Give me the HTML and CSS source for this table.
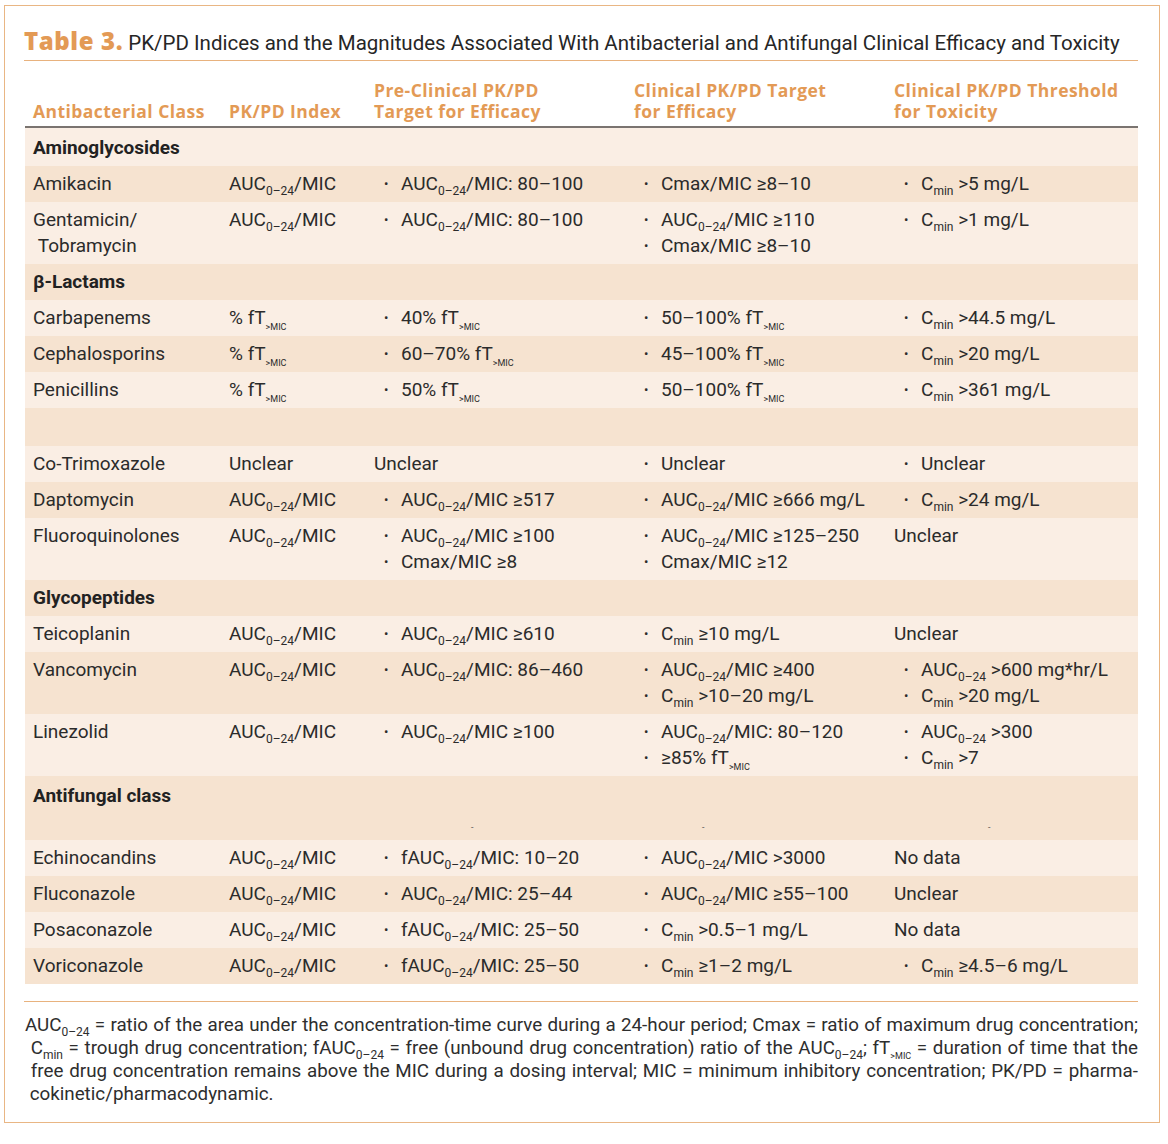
FILE: index.html
```html
<!DOCTYPE html>
<html>
<head>
<meta charset="utf-8">
<link rel="stylesheet" href="styles.css">
</head>
<body>
<div class="box">
  <div class="title"><span class="tnum">Table 3.</span> PK/PD Indices and the Magnitudes Associated With Antibacterial and Antifungal Clinical Efficacy and Toxicity</div>
  <table class="tbl">
    <colgroup>
      <col class="c1"><col class="c2"><col class="c3"><col class="c4"><col class="c5">
    </colgroup>
    <thead>
      <tr>
        <th>Antibacterial Class</th>
        <th>PK/PD Index</th>
        <th>Pre-Clinical PK/PD<br>Target for Efficacy</th>
        <th>Clinical PK/PD Target<br>for Efficacy</th>
        <th>Clinical PK/PD Threshold<br>for Toxicity</th>
      </tr>
    </thead>
    <tbody>
      <tr class="lt sec"><td colspan="5">Aminoglycosides</td></tr>
      <tr class="dk">
        <td>Amikacin</td>
        <td>AUC<span class="sb">0–24</span>/MIC</td>
        <td><div class="li">AUC<span class="sb">0–24</span>/MIC: 80–100</div></td>
        <td><div class="li">Cmax/MIC ≥8–10</div></td>
        <td><div class="li">C<span class="sb">min</span> &gt;5 mg/L</div></td>
      </tr>
      <tr class="lt">
        <td>Gentamicin/<br>&nbsp;Tobramycin</td>
        <td>AUC<span class="sb">0–24</span>/MIC</td>
        <td><div class="li">AUC<span class="sb">0–24</span>/MIC: 80–100</div></td>
        <td><div class="li">AUC<span class="sb">0–24</span>/MIC ≥110</div><div class="li">Cmax/MIC ≥8–10</div></td>
        <td><div class="li">C<span class="sb">min</span> &gt;1 mg/L</div></td>
      </tr>
      <tr class="dk sec"><td colspan="5">β-Lactams</td></tr>
      <tr class="lt">
        <td>Carbapenems</td>
        <td>% fT<span class="sm">&gt;MIC</span></td>
        <td><div class="li">40% fT<span class="sm">&gt;MIC</span></div></td>
        <td><div class="li">50–100% fT<span class="sm">&gt;MIC</span></div></td>
        <td><div class="li">C<span class="sb">min</span> &gt;44.5 mg/L</div></td>
      </tr>
      <tr class="dk">
        <td>Cephalosporins</td>
        <td>% fT<span class="sm">&gt;MIC</span></td>
        <td><div class="li">60–70% fT<span class="sm">&gt;MIC</span></div></td>
        <td><div class="li">45–100% fT<span class="sm">&gt;MIC</span></div></td>
        <td><div class="li">C<span class="sb">min</span> &gt;20 mg/L</div></td>
      </tr>
      <tr class="lt">
        <td>Penicillins</td>
        <td>% fT<span class="sm">&gt;MIC</span></td>
        <td><div class="li">50% fT<span class="sm">&gt;MIC</span></div></td>
        <td><div class="li">50–100% fT<span class="sm">&gt;MIC</span></div></td>
        <td><div class="li">C<span class="sb">min</span> &gt;361 mg/L</div></td>
      </tr>
      <tr class="dk empty"><td colspan="5">&nbsp;</td></tr>
      <tr class="lt">
        <td>Co-Trimoxazole</td>
        <td>Unclear</td>
        <td>Unclear</td>
        <td><div class="li">Unclear</div></td>
        <td><div class="li">Unclear</div></td>
      </tr>
      <tr class="dk">
        <td>Daptomycin</td>
        <td>AUC<span class="sb">0–24</span>/MIC</td>
        <td><div class="li">AUC<span class="sb">0–24</span>/MIC ≥517</div></td>
        <td><div class="li">AUC<span class="sb">0–24</span>/MIC ≥666 mg/L</div></td>
        <td><div class="li">C<span class="sb">min</span> &gt;24 mg/L</div></td>
      </tr>
      <tr class="lt">
        <td>Fluoroquinolones</td>
        <td>AUC<span class="sb">0–24</span>/MIC</td>
        <td><div class="li">AUC<span class="sb">0–24</span>/MIC ≥100</div><div class="li">Cmax/MIC ≥8</div></td>
        <td><div class="li">AUC<span class="sb">0–24</span>/MIC ≥125–250</div><div class="li">Cmax/MIC ≥12</div></td>
        <td>Unclear</td>
      </tr>
      <tr class="dk sec"><td colspan="5">Glycopeptides</td></tr>
      <tr class="lt">
        <td>Teicoplanin</td>
        <td>AUC<span class="sb">0–24</span>/MIC</td>
        <td><div class="li">AUC<span class="sb">0–24</span>/MIC ≥610</div></td>
        <td><div class="li">C<span class="sb">min</span> ≥10 mg/L</div></td>
        <td>Unclear</td>
      </tr>
      <tr class="dk">
        <td>Vancomycin</td>
        <td>AUC<span class="sb">0–24</span>/MIC</td>
        <td><div class="li">AUC<span class="sb">0–24</span>/MIC: 86–460</div></td>
        <td><div class="li">AUC<span class="sb">0–24</span>/MIC ≥400</div><div class="li">C<span class="sb">min</span> &gt;10–20 mg/L</div></td>
        <td><div class="li">AUC<span class="sb">0–24</span> &gt;600 mg*hr/L</div><div class="li">C<span class="sb">min</span> &gt;20 mg/L</div></td>
      </tr>
      <tr class="lt">
        <td>Linezolid</td>
        <td>AUC<span class="sb">0–24</span>/MIC</td>
        <td><div class="li">AUC<span class="sb">0–24</span>/MIC ≥100</div></td>
        <td><div class="li">AUC<span class="sb">0–24</span>/MIC: 80–120</div><div class="li">≥85% fT<span class="sm">&gt;MIC</span></div></td>
        <td><div class="li">AUC<span class="sb">0–24</span> &gt;300</div><div class="li">C<span class="sb">min</span> &gt;7</div></td>
      </tr>
      <tr class="dk sec af">
        <td>Antifungal class</td>
        <td></td>
        <td><span class="tick tick-a">-</span></td>
        <td><span class="tick tick-b">-</span></td>
        <td><span class="tick tick-c">-</span></td>
      </tr>
      <tr class="lt">
        <td>Echinocandins</td>
        <td>AUC<span class="sb">0–24</span>/MIC</td>
        <td><div class="li">fAUC<span class="sb">0–24</span>/MIC: 10–20</div></td>
        <td><div class="li">AUC<span class="sb">0–24</span>/MIC &gt;3000</div></td>
        <td>No data</td>
      </tr>
      <tr class="dk">
        <td>Fluconazole</td>
        <td>AUC<span class="sb">0–24</span>/MIC</td>
        <td><div class="li">AUC<span class="sb">0–24</span>/MIC: 25–44</div></td>
        <td><div class="li">AUC<span class="sb">0–24</span>/MIC ≥55–100</div></td>
        <td>Unclear</td>
      </tr>
      <tr class="lt">
        <td>Posaconazole</td>
        <td>AUC<span class="sb">0–24</span>/MIC</td>
        <td><div class="li">fAUC<span class="sb">0–24</span>/MIC: 25–50</div></td>
        <td><div class="li">C<span class="sb">min</span> &gt;0.5–1 mg/L</div></td>
        <td>No data</td>
      </tr>
      <tr class="dk">
        <td>Voriconazole</td>
        <td>AUC<span class="sb">0–24</span>/MIC</td>
        <td><div class="li">fAUC<span class="sb">0–24</span>/MIC: 25–50</div></td>
        <td><div class="li">C<span class="sb">min</span> ≥1–2 mg/L</div></td>
        <td><div class="li">C<span class="sb">min</span> ≥4.5–6 mg/L</div></td>
      </tr>
    </tbody>
  </table>
  <div class="foot">
    <span class="fl">AUC<span class="sbf">0–24</span> = ratio of the area under the concentration-time curve during a 24-hour period; Cmax = ratio of maximum drug concentration;</span>
    <span class="fl">&nbsp;C<span class="sbf">min</span> = trough drug concentration; fAUC<span class="sbf">0–24</span> = free (unbound drug concentration) ratio of the AUC<span class="sbf">0–24</span>; fT<span class="smf">&gt;MIC</span> = duration of time that the</span>
    <span class="fl">&nbsp;free drug concentration remains above the MIC during a dosing interval; MIC = minimum inhibitory concentration; PK/PD = pharma-</span>
    <span class="fl last">&nbsp;cokinetic/pharmacodynamic.</span>
  </div>
</div>
</body>
</html>
```

FILE: styles.css
```css
html, body {
  margin: 0;
  padding: 0;
  background: #ffffff;
}

body {
  font-family: Roboto, "Liberation Sans", Arial, sans-serif;
  color: #2b2b2b;
}

.box {
  margin: 5px 0 0 4px;
  width: 1156px;
  height: 1118px;
  box-sizing: border-box;
  border: 1px solid #e9b684;
  padding: 22px 20px 0 19px;
}

.title {
  font-size: 20.5px;
  line-height: 26px;
  color: #262626;
  padding-bottom: 4px;
  border-bottom: 1px solid #e8b27e;
  white-space: nowrap;
  width: 1114px;
}

.tnum {
  font-family: "Open Sans", "Liberation Sans", sans-serif;
  font-weight: 800;
  font-size: 24px;
  letter-spacing: 0.6px;
  color: #e39a55;
}

.tbl {
  width: 1113px;
  margin: 19px 0 0 1px;
  border-collapse: collapse;
  table-layout: fixed;
}

.c1 { width: 196px; }
.c2 { width: 145px; }
.c3 { width: 260px; }
.c4 { width: 260px; }
.c5 { width: 252px; }

.tbl th {
  font-family: "Open Sans", "Liberation Sans", sans-serif;
  font-weight: 700;
  font-size: 17.5px;
  letter-spacing: 0.45px;
  line-height: 21px;
  color: #e39a55;
  text-align: left;
  vertical-align: bottom;
  padding: 0 4px 4px 8px;
  border-bottom: 2px solid #7a7470;
  white-space: nowrap;
}

.tbl td {
  font-size: 19px;
  line-height: 26px;
  padding: 5px 4px 5px 8px;
  vertical-align: top;
  white-space: nowrap;
}

.tbl tbody tr:first-child td {
  padding-top: 7px;
}

.lt { background: #faeee4; }
.dk { background: #f6e3d0; }

.sec td {
  font-weight: 700;
  color: #222;
}

.empty td {
  padding-top: 6px;
  padding-bottom: 6px;
}

.af td {
  height: 54px;
  padding-top: 7px;
  padding-bottom: 3px;
}

.af td:not(:first-child) {
  vertical-align: bottom;
}

.tick {
  font-size: 9px;
  line-height: 9px;
  display: inline-block;
  font-weight: 400;
  color: #555;
}

.tick-a { padding-left: 97px; }
.tick-b { padding-left: 68px; }
.tick-c { padding-left: 94px; }

.li {
  position: relative;
  padding-left: 27px;
}

.li::before {
  content: "•";
  position: absolute;
  left: 10px;
  top: 0;
  font-size: 13px;
}

.sb {
  font-size: 12px;
  line-height: 0;
  vertical-align: -5px;
}

.sm {
  font-size: 9px;
  line-height: 0;
  vertical-align: -6px;
}

.foot {
  margin-top: 17px;
  border-top: 1px solid #e8b27e;
  padding: 12px 0 0 1px;
  width: 1113px;
  font-size: 18.8px;
  line-height: 23px;
  color: #2e2e2e;
}

.fl {
  display: block;
  text-align: justify;
  text-align-last: justify;
  white-space: nowrap;
}

.fl.last {
  text-align-last: left;
}

.sbf {
  font-size: 12px;
  line-height: 0;
  vertical-align: -5px;
}

.smf {
  font-size: 9px;
  line-height: 0;
  vertical-align: -5px;
}
```
